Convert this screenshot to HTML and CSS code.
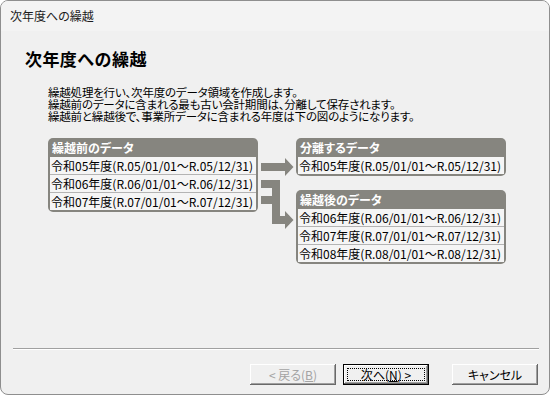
FILE: index.html
```html
<!DOCTYPE html>
<html lang="ja">
<head>
  <meta charset="UTF-8">
  <title>次年度への繰越</title>
  <link rel="stylesheet" href="styles.css">
</head>
<body>
  <div class="window">
    <div class="titlebar">次年度への繰越</div>
    <div class="client">
      <h1 class="heading">次年度への繰越</h1>
      <p class="desc">
        繰越処理を行い、次年度のデータ領域を作成します。<br>
        繰越前のデータに含まれる最も古い会計期間は、分離して保存されます。<br>
        繰越前と繰越後で、事業所データに含まれる年度は下の図のようになります。
      </p>
      <div class="diagram">
        <div class="dbox">
          <div class="dbox-head">繰越前のデータ</div>
          <div class="dbox-row">令和05年度(R.05/01/01～R.05/12/31)</div>
          <div class="dbox-row">令和06年度(R.06/01/01～R.06/12/31)</div>
          <div class="dbox-row">令和07年度(R.07/01/01～R.07/12/31)</div>
        </div>
        <svg class="arrows" width="38" height="92" viewBox="0 0 38 92">
          <polygon points="3,25 27,25 27,20 35.5,29 27,38 27,33 3,33" />
          <polygon points="3,42 22,42 22,78 27,78 27,73 35.5,82 27,91 27,86 14,86 14,66 3,66 3,58 14,58 14,50 3,50" />
        </svg>
        <div class="dcol">
          <div class="dbox">
            <div class="dbox-head">分離するデータ</div>
            <div class="dbox-row">令和05年度(R.05/01/01～R.05/12/31)</div>
          </div>
          <div class="dbox after">
            <div class="dbox-head">繰越後のデータ</div>
            <div class="dbox-row">令和06年度(R.06/01/01～R.06/12/31)</div>
            <div class="dbox-row">令和07年度(R.07/01/01～R.07/12/31)</div>
            <div class="dbox-row">令和08年度(R.08/01/01～R.08/12/31)</div>
          </div>
        </div>
      </div>
      <div class="footer">
        <div class="sep"></div>
        <div class="buttons">
          <button class="btn disabled">&lt; 戻る(<u>B</u>)</button>
          <button class="btn default">次へ(<u>N</u>) &gt;</button>
          <button class="btn cancel">キャンセル</button>
        </div>
      </div>
    </div>
  </div>
</body>
</html>
```

FILE: styles.css
```css
body { margin: 0; background: #fff; font-family: "Noto Sans CJK JP", sans-serif; font-size: 12px; color: #000; }
.window { width: 550px; height: 395px; box-sizing: border-box; border: 1px solid #8e8e8e; border-radius: 8px; overflow: hidden; background: #f0f0f0; display: flex; flex-direction: column; }
.titlebar { height: 30px; line-height: 30px; padding-left: 9px; background: #f3f3f3; color: #1b1b1b; font-feature-settings: "palt"; }
.client { flex: 1; display: flex; flex-direction: column; }
.heading { margin: 18px 0 0 24px; font-size: 17px; line-height: 20px; font-weight: bold; letter-spacing: 0.4px; }
.desc { margin: 17px 0 0 47px; font-size: 11.5px; line-height: 12px; letter-spacing: -0.2px; font-feature-settings: "palt"; }

.diagram { display: flex; align-items: flex-start; margin: 16px 0 0 47px; }
.dbox { width: 210px; box-sizing: border-box; background: #86857f; border-radius: 5px; padding: 0 2px 2px; }
.dbox-head { height: 19px; line-height: 19px; padding-left: 2px; color: #fff; font-weight: bold; font-feature-settings: "palt"; }
.dbox-row { height: 17px; line-height: 17px; padding-left: 1px; background: #f5f5f5; white-space: nowrap; }
.dbox-row + .dbox-row { border-top: 1px solid #b4b4b4; }
.arrows { display: block; fill: #86857f; }
.dcol { display: flex; flex-direction: column; }
.dbox.after { margin-top: 14px; }

.footer { margin-top: auto; padding-bottom: 9px; }
.sep { border-top: 1px solid #a0a0a0; border-bottom: 1px solid #fff; margin: 0 10px 0 12px; }
.buttons { display: flex; justify-content: flex-end; margin-top: 14px; padding-right: 11px; }
.btn { width: 86px; height: 21px; box-sizing: border-box; padding: 0; border: none; background: #f0f0f0; font: inherit; color: #000; font-feature-settings: "palt";
  box-shadow: inset -1px -1px #696969, inset 1px 1px #fff, inset -2px -2px #a0a0a0, inset 2px 2px #f0f0f0; }
.btn.disabled { color: #a3a3a3; }
.btn.default { margin-left: 7px; border: 1px solid #000; outline: 1px dotted #000; outline-offset: -5px; }
.btn.cancel { margin-left: 23px; }
```
